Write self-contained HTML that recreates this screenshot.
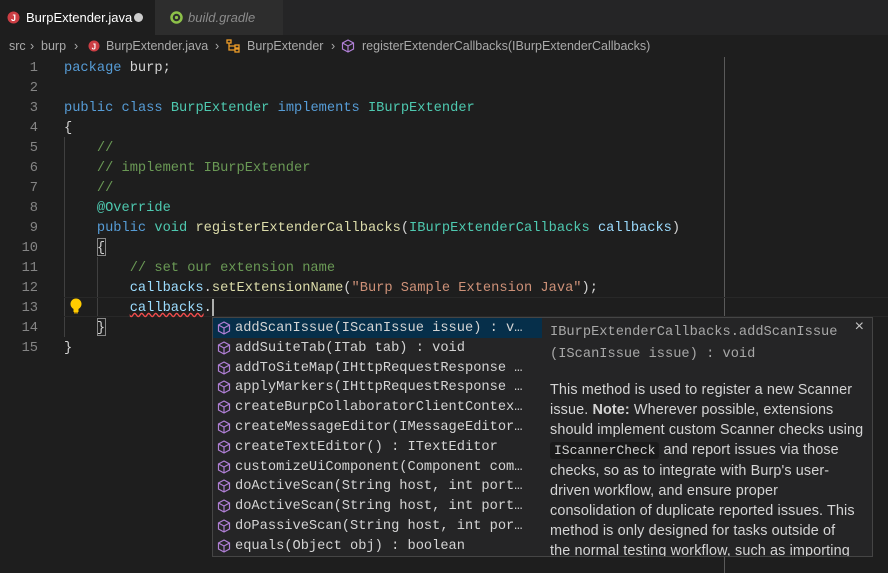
<!DOCTYPE html>
<html><head><meta charset="utf-8"><style>
*{margin:0;padding:0;box-sizing:border-box}
body{width:888px;height:573px;background:#1e1e1e;overflow:hidden;position:relative;font-family:"Liberation Sans",sans-serif}
.tabs{position:absolute;left:0;top:0;width:888px;height:35px;background:#252526}
.tab{position:absolute;top:0;height:35px;font-size:13px;line-height:35px}
.t1{left:0;width:155px;background:#1e1e1e;color:#fff}
.t2{left:155px;width:128px;background:#2d2d2d;color:#8b8b8b;font-style:italic}
.crumbs{position:absolute;top:35px;left:0;height:22px;width:888px;font-size:12.5px;color:#a9a9a9;line-height:22px;white-space:nowrap}
.mono{font-family:"Liberation Mono",monospace;font-size:13.7px}
.ln{position:absolute;left:0;width:38px;text-align:right;color:#858585;height:20px;line-height:20px;margin-top:2px}
.code{position:absolute;left:64px;height:20px;line-height:20px;white-space:pre;color:#d4d4d4;margin-top:2px}
.k{color:#569cd6}.c{color:#4ec9b0}.cm{color:#6a9955}.v{color:#9cdcfe}.s{color:#ce9178}.f{color:#dcdcaa}
.sug{position:absolute;left:212px;top:317px;width:331px;height:240px;background:#252526;border:1px solid #454545;overflow:hidden}
.row{position:relative;height:19.8px;line-height:21px;padding-left:22px;color:#d4d4d4;white-space:pre}
.row svg{position:absolute;left:4px;top:3px}
.sel{background:#062f4a}
.det{position:absolute;left:542px;top:317px;width:331px;height:240px;background:#252526;border:1px solid #454545;border-left:none;overflow:hidden;padding:4px 8px 0 8px}
.det .t{color:#a8a8a8;line-height:22px}
.det p{font-size:14.4px;letter-spacing:0.12px;color:#d4d4d4;line-height:20px;margin-top:14px;white-space:nowrap}
code{font-family:"Liberation Mono",monospace;font-size:13px;letter-spacing:0;background:#1a1a1a;padding:1px 4px;border-radius:3px}
</style></head><body>
<div class="tabs">
 <div class="tab t1"><svg style="position:absolute;left:7px;top:11px" width="13" height="13"><circle cx="6.5" cy="6.5" r="6" fill="#cc3e44"/><text x="4" y="10" font-size="9" fill="#fff" font-family="Liberation Sans" font-weight="bold">J</text></svg><span style="position:absolute;left:26px">BurpExtender.java</span><span style="position:absolute;left:134px;top:13px;width:9px;height:9px;border-radius:50%;background:#ccc;line-height:0"></span></div>
 <div class="tab t2"><svg style="position:absolute;left:15px;top:11px" width="13" height="13"><circle cx="6.5" cy="6.5" r="5" fill="none" stroke="#8dc149" stroke-width="2.5"/><circle cx="6.5" cy="6.5" r="1.6" fill="#8dc149"/></svg><span style="position:absolute;left:33px">build.gradle</span></div>
</div>
<div class="crumbs">
 <span style="position:absolute;left:9px">src</span><span style="position:absolute;left:30px">›</span>
 <span style="position:absolute;left:41px">burp</span><span style="position:absolute;left:74px">›</span>
 <svg style="position:absolute;left:88px;top:5px" width="12" height="12"><circle cx="6" cy="6" r="5.5" fill="#cc3e44"/><text x="3.6" y="9.3" font-size="8" fill="#fff" font-weight="bold" font-family="Liberation Sans">J</text></svg>
 <span style="position:absolute;left:106px">BurpExtender.java</span><span style="position:absolute;left:215px">›</span>
 <svg style="position:absolute;left:226px;top:4px" width="15" height="14" fill="none" stroke="#ee9d28" stroke-width="1.3"><rect x="1" y="1" width="4" height="3"/><rect x="9" y="6" width="4" height="3"/><rect x="9" y="10" width="4" height="3"/><path d="M3 4v7h6M3 7h6"/></svg>
 <span style="position:absolute;left:247px">BurpExtender</span><span style="position:absolute;left:331px">›</span>
 <svg style="position:absolute;left:341px;top:4px" width="14" height="14" fill="none" stroke="#b180d7" stroke-width="1.2"><path d="M7 1l5.5 3v6L7 13 1.5 10V4z M1.5 4L7 7l5.5-3 M7 7v6"/></svg>
 <span style="position:absolute;left:362px">registerExtenderCallbacks(IBurpExtenderCallbacks)</span>
</div>
<div style="position:absolute;left:64px;top:137px;width:1px;height:200px;background:#404040"></div>
<div style="position:absolute;left:97px;top:257px;width:1px;height:60px;background:#404040"></div>
<div style="position:absolute;left:724px;top:57px;width:1px;height:516px;background:#5a5a5a"></div>
<div style="position:absolute;left:64px;top:297px;width:824px;height:20px;border-top:1px solid #282828;border-bottom:1px solid #282828"></div>
<div style="position:absolute;left:97px;top:238px;width:9px;height:18px;border:1px solid #888"></div>
<div style="position:absolute;left:97px;top:318px;width:9px;height:18px;border:1px solid #888"></div>
<div class="mono">
<div class="ln" style="top:57px">1</div><div class="ln" style="top:77px">2</div><div class="ln" style="top:97px">3</div><div class="ln" style="top:117px">4</div><div class="ln" style="top:137px">5</div><div class="ln" style="top:157px">6</div><div class="ln" style="top:177px">7</div><div class="ln" style="top:197px">8</div><div class="ln" style="top:217px">9</div><div class="ln" style="top:237px">10</div><div class="ln" style="top:257px">11</div><div class="ln" style="top:277px">12</div><div class="ln" style="top:297px">13</div><div class="ln" style="top:317px">14</div><div class="ln" style="top:337px">15</div>
<div class="code" style="top:57px"><span class="k">package</span> burp;</div>
<div class="code" style="top:97px"><span class="k">public</span> <span class="k">class</span> <span class="c">BurpExtender</span> <span class="k">implements</span> <span class="c">IBurpExtender</span></div>
<div class="code" style="top:117px">{</div>
<div class="code cm" style="top:137px">    //</div>
<div class="code cm" style="top:157px">    // implement IBurpExtender</div>
<div class="code cm" style="top:177px">    //</div>
<div class="code" style="top:197px">    <span class="c">@Override</span></div>
<div class="code" style="top:217px">    <span class="k">public</span> <span class="c">void</span> <span class="f">registerExtenderCallbacks</span>(<span class="c">IBurpExtenderCallbacks</span> <span class="v">callbacks</span>)</div>
<div class="code" style="top:237px">    {</div>
<div class="code cm" style="top:257px">        // set our extension name</div>
<div class="code" style="top:277px">        <span class="v">callbacks</span>.<span class="f">setExtensionName</span>(<span class="s">"Burp Sample Extension Java"</span>);</div>
<div class="code" style="top:297px">        <span class="v" style="text-decoration:underline wavy #f14c4c">callbacks</span>.</div>
<div class="code" style="top:317px">    }</div>
<div class="code" style="top:337px">}</div>
</div>
<svg style="position:absolute;left:69px;top:297px" width="14" height="18"><circle cx="7" cy="7" r="5.5" fill="#ffcc00"/><rect x="4.5" y="11" width="5" height="4" fill="#ffcc00"/><rect x="5" y="15" width="4" height="1.5" fill="#c09000"/></svg>
<div style="position:absolute;left:212px;top:299px;width:2px;height:17px;background:#aeafad"></div>
<div class="sug mono">
<div class="row sel"><svg width="14" height="14" fill="none" stroke="#b180d7" stroke-width="1.2"><path d="M7 1l5.5 3v6L7 13 1.5 10V4z M1.5 4L7 7l5.5-3 M7 7v6"/></svg>addScanIssue(IScanIssue issue) : v…</div>
<div class="row"><svg width="14" height="14" fill="none" stroke="#b180d7" stroke-width="1.2"><path d="M7 1l5.5 3v6L7 13 1.5 10V4z M1.5 4L7 7l5.5-3 M7 7v6"/></svg>addSuiteTab(ITab tab) : void</div>
<div class="row"><svg width="14" height="14" fill="none" stroke="#b180d7" stroke-width="1.2"><path d="M7 1l5.5 3v6L7 13 1.5 10V4z M1.5 4L7 7l5.5-3 M7 7v6"/></svg>addToSiteMap(IHttpRequestResponse …</div>
<div class="row"><svg width="14" height="14" fill="none" stroke="#b180d7" stroke-width="1.2"><path d="M7 1l5.5 3v6L7 13 1.5 10V4z M1.5 4L7 7l5.5-3 M7 7v6"/></svg>applyMarkers(IHttpRequestResponse …</div>
<div class="row"><svg width="14" height="14" fill="none" stroke="#b180d7" stroke-width="1.2"><path d="M7 1l5.5 3v6L7 13 1.5 10V4z M1.5 4L7 7l5.5-3 M7 7v6"/></svg>createBurpCollaboratorClientContex…</div>
<div class="row"><svg width="14" height="14" fill="none" stroke="#b180d7" stroke-width="1.2"><path d="M7 1l5.5 3v6L7 13 1.5 10V4z M1.5 4L7 7l5.5-3 M7 7v6"/></svg>createMessageEditor(IMessageEditor…</div>
<div class="row"><svg width="14" height="14" fill="none" stroke="#b180d7" stroke-width="1.2"><path d="M7 1l5.5 3v6L7 13 1.5 10V4z M1.5 4L7 7l5.5-3 M7 7v6"/></svg>createTextEditor() : ITextEditor</div>
<div class="row"><svg width="14" height="14" fill="none" stroke="#b180d7" stroke-width="1.2"><path d="M7 1l5.5 3v6L7 13 1.5 10V4z M1.5 4L7 7l5.5-3 M7 7v6"/></svg>customizeUiComponent(Component com…</div>
<div class="row"><svg width="14" height="14" fill="none" stroke="#b180d7" stroke-width="1.2"><path d="M7 1l5.5 3v6L7 13 1.5 10V4z M1.5 4L7 7l5.5-3 M7 7v6"/></svg>doActiveScan(String host, int port…</div>
<div class="row"><svg width="14" height="14" fill="none" stroke="#b180d7" stroke-width="1.2"><path d="M7 1l5.5 3v6L7 13 1.5 10V4z M1.5 4L7 7l5.5-3 M7 7v6"/></svg>doActiveScan(String host, int port…</div>
<div class="row"><svg width="14" height="14" fill="none" stroke="#b180d7" stroke-width="1.2"><path d="M7 1l5.5 3v6L7 13 1.5 10V4z M1.5 4L7 7l5.5-3 M7 7v6"/></svg>doPassiveScan(String host, int por…</div>
<div class="row"><svg width="14" height="14" fill="none" stroke="#b180d7" stroke-width="1.2"><path d="M7 1l5.5 3v6L7 13 1.5 10V4z M1.5 4L7 7l5.5-3 M7 7v6"/></svg>equals(Object obj) : boolean</div>
</div>
<div class="det">
<div class="t mono">IBurpExtenderCallbacks.addScanIssue<br>(IScanIssue issue) : void</div>
<span style="position:absolute;right:8px;top:0;color:#c5c5c5;font-size:16px">×</span>
<p>This method is used to register a new Scanner<br>issue. <b>Note:</b> Wherever possible, extensions<br>should implement custom Scanner checks using<br><code>IScannerCheck</code> and report issues via those<br>checks, so as to integrate with Burp's user-<br>driven workflow, and ensure proper<br>consolidation of duplicate reported issues. This<br>method is only designed for tasks outside of<br>the normal testing workflow, such as importing</p>
</div>
</body></html>
